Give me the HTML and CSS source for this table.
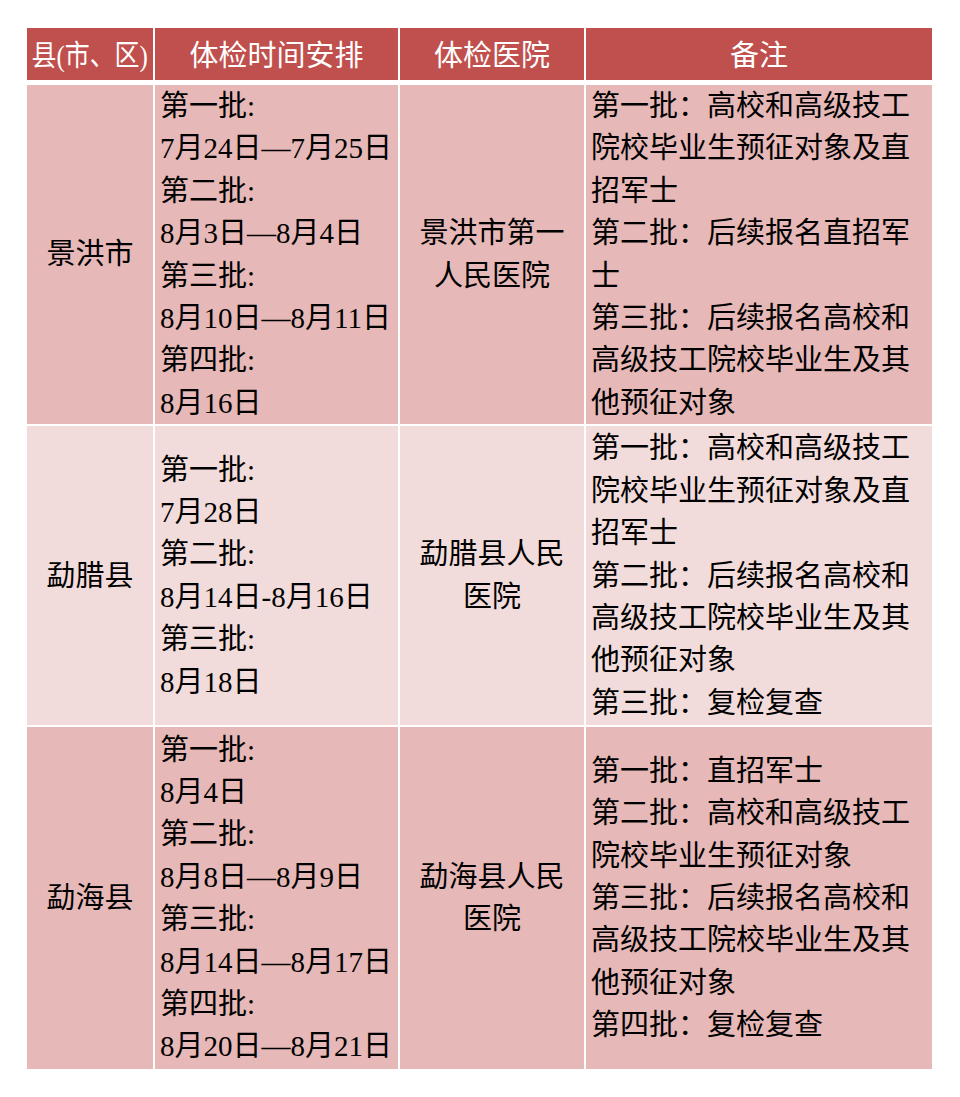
FILE: index.html
```html
<!DOCTYPE html>
<html lang="zh-CN">
<head>
<meta charset="utf-8">
<title>体检时间安排</title>
<link rel="stylesheet" href="styles.css">
</head>
<body>
<table class="schedule">
  <colgroup>
    <col class="c-county">
    <col class="c-time">
    <col class="c-hosp">
    <col class="c-note">
  </colgroup>
  <thead>
    <tr class="head">
      <th class="h-county"><span class="squeeze">县(市、区)</span></th>
      <th>体检时间安排</th>
      <th>体检医院</th>
      <th>备注</th>
    </tr>
  </thead>
  <tbody>
    <tr class="r1 dark">
      <td class="center">景洪市</td>
      <td>第一批:<br>7月24日—7月25日<br>第二批:<br>8月3日—8月4日<br>第三批:<br>8月10日—8月11日<br>第四批:<br>8月16日</td>
      <td class="center">景洪市第一<br>人民医院</td>
      <td>第一批：高校和高级技工<br>院校毕业生预征对象及直<br>招军士<br>第二批：后续报名直招军<br>士<br>第三批：后续报名高校和<br>高级技工院校毕业生及其<br>他预征对象</td>
    </tr>
    <tr class="r2 light">
      <td class="center">勐腊县</td>
      <td>第一批:<br>7月28日<br>第二批:<br>8月14日-8月16日<br>第三批:<br>8月18日</td>
      <td class="center">勐腊县人民<br>医院</td>
      <td>第一批：高校和高级技工<br>院校毕业生预征对象及直<br>招军士<br>第二批：后续报名高校和<br>高级技工院校毕业生及其<br>他预征对象<br>第三批：复检复查</td>
    </tr>
    <tr class="r3 dark">
      <td class="center">勐海县</td>
      <td>第一批:<br>8月4日<br>第二批:<br>8月8日—8月9日<br>第三批:<br>8月14日—8月17日<br>第四批:<br>8月20日—8月21日</td>
      <td class="center">勐海县人民<br>医院</td>
      <td>第一批：直招军士<br>第二批：高校和高级技工<br>院校毕业生预征对象<br>第三批：后续报名高校和<br>高级技工院校毕业生及其<br>他预征对象<br>第四批：复检复查</td>
    </tr>
  </tbody>
</table>
</body>
</html>
```

FILE: styles.css
```css
html, body {
  margin: 0;
  padding: 0;
  background: #ffffff;
}

body {
  font-family: "Liberation Serif", "Noto Sans CJK SC", serif;
  color: #000000;
}

.schedule {
  margin: 28px 0 0 27px;
  width: 905px;
  border-collapse: separate;
  border-spacing: 0;
  table-layout: fixed;
  font-size: 29px;
}

.c-county { width: 128px; }
.c-time { width: 245px; }
.c-hosp { width: 186px; }
.c-note { width: 346px; }

.schedule th,
.schedule td {
  border-right: 2px solid #ffffff;
  white-space: nowrap;
  vertical-align: middle;
}

.schedule th:last-child,
.schedule td:last-child {
  border-right: 0;
}

.schedule th {
  background: #c0504d;
  color: #ffffff;
  font-weight: normal;
  text-align: center;
  line-height: 1;
  padding: 4px 0 0 0;
  border-bottom: 5px solid #ffffff;
}

.head { height: 57px; }

.squeeze {
  display: inline-block;
  transform: scaleX(0.86);
  margin: 0 -5px;
}

.schedule td {
  padding: 0 5px;
  line-height: 42.4px;
  text-align: left;
  border-bottom: 2px solid #ffffff;
}

.schedule tr:last-child td {
  border-bottom: 0;
}

.schedule td.center {
  text-align: center;
}

.dark td { background: #e6b8b7; }
.light td { background: #f2dcdb; }

.r1 { height: 341px; }
.r2 { height: 301px; }
.r3 { height: 342px; }
```
